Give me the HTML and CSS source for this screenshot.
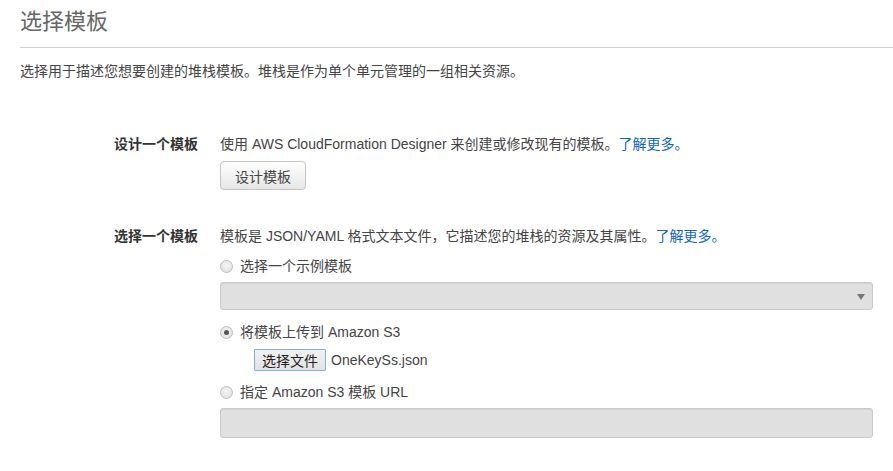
FILE: index.html
```html
<!DOCTYPE html>
<html lang="zh-CN">
<head>
<meta charset="utf-8">
<title>选择模板</title>
<link rel="stylesheet" href="styles.css">
</head>
<body>
<div class="page">
  <h1 class="title">选择模板</h1>
  <p class="intro">选择用于描述您想要创建的堆栈模板。堆栈是作为单个单元管理的一组相关资源。</p>

  <div class="form">
    <div class="row row-design">
      <div class="label">设计一个模板</div>
      <div class="content">
        <div class="line">使用 AWS CloudFormation Designer 来创建或修改现有的模板。<a class="link" href="#">了解更多。</a></div>
        <button class="btn" type="button">设计模板</button>
      </div>
    </div>

    <div class="row row-choose">
      <div class="label">选择一个模板</div>
      <div class="content">
        <div class="line">模板是 JSON/YAML 格式文本文件，它描述您的堆栈的资源及其属性。<a class="link" href="#">了解更多。</a></div>

        <label class="radio-line first">
          <span class="radio"></span>
          <span>选择一个示例模板</span>
        </label>
        <div class="select"></div>

        <label class="radio-line second">
          <span class="radio checked"></span>
          <span>将模板上传到 Amazon S3</span>
        </label>
        <div class="file-line">
          <button class="file-btn" type="button">选择文件</button>
          <span class="file-name">OneKeySs.json</span>
        </div>

        <label class="radio-line third">
          <span class="radio"></span>
          <span>指定 Amazon S3 模板 URL</span>
        </label>
        <div class="textbox"></div>
      </div>
    </div>
  </div>
</div>
</body>
</html>
```

FILE: styles.css
```css
html, body {
  margin: 0;
  padding: 0;
  background: #fff;
}

body {
  font-family: "Liberation Sans", "Noto Sans CJK SC", sans-serif;
  font-size: 14px;
  color: #444;
}

.page {
  padding: 0 20px;
}

.title {
  margin: 0 -20px 0 0;
  padding: 8px 0 11px;
  font-size: 22px;
  line-height: 28px;
  font-weight: normal;
  color: #666;
  border-bottom: 1px solid #cfcfcf;
}

.intro {
  margin: 13px 0 0;
  line-height: 20px;
}

.form {
  padding-left: 94px;
}

.row {
  display: grid;
  grid-template-columns: 106px 1fr;
}

.row-design {
  margin-top: 53px;
}

.row-choose {
  margin-top: 36px;
}

.label {
  font-weight: bold;
  color: #333;
  line-height: 20px;
}

.content {
  display: flex;
  flex-direction: column;
  align-items: flex-start;
}

.line {
  line-height: 20px;
}

.link {
  color: #1166bb;
  text-decoration: none;
}

.btn {
  margin-top: 7px;
  height: 29px;
  padding: 0 14px;
  font-family: inherit;
  font-size: 14px;
  color: #444;
  border: 1px solid #c4c4c4;
  border-radius: 4px;
  background: linear-gradient(#ffffff, #e6e6e6);
}

.radio-line {
  display: flex;
  align-items: center;
  gap: 7px;
  line-height: 20px;
}

.radio-line.first { margin-top: 10px; }
.radio-line.second { margin-top: 12px; }
.radio-line.third { margin-top: 11px; }

.radio {
  box-sizing: border-box;
  width: 13px;
  height: 13px;
  border-radius: 50%;
  border: 1px solid #bdbdbd;
  background: radial-gradient(circle at 50% 40%, #f6f6f6, #dcdcdc);
  position: relative;
}

.radio.checked::after {
  content: "";
  position: absolute;
  left: 3px;
  top: 3px;
  width: 5px;
  height: 5px;
  border-radius: 50%;
  background: #555;
}

.select, .textbox {
  align-self: stretch;
  box-sizing: border-box;
  border: 1px solid #cacaca;
  border-radius: 3px;
  background: #e0e0e0;
  box-shadow: inset 0 1px 1px rgba(0, 0, 0, 0.06);
}

.select {
  margin-top: 6px;
  height: 28px;
  position: relative;
}

.select::after {
  content: "";
  position: absolute;
  right: 7px;
  top: 11px;
  border-left: 4px solid transparent;
  border-right: 4px solid transparent;
  border-top: 6px solid #777;
}

.file-line {
  margin-top: 7px;
  margin-left: 34px;
  display: flex;
  align-items: center;
  gap: 5px;
}

.file-btn {
  height: 22px;
  padding: 0 7px;
  font-family: inherit;
  font-size: 14px;
  color: #222;
  border: 1px solid #7fb1e6;
  border-radius: 1px;
  background: linear-gradient(#f2f2f2, #e2e2e2);
}

.file-name {
  color: #444;
}

.textbox {
  margin-top: 6px;
  height: 30px;
}
```
